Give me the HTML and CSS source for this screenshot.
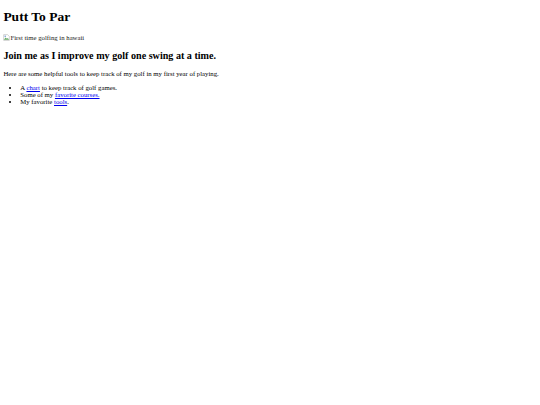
FILE: index.html
```html
<!DOCTYPE html>
<html>
<head>
<meta charset="utf-8">
<title>Putt To Par</title>
<link rel="stylesheet" href="styles.css">
</head>
<body class="page">
<h1 class="title">Putt To Par</h1>
<p class="para"><span class="broken"><svg class="broken-icon" width="7" height="7" viewBox="0 0 16 16"><path d="M1.5 1.5h9l4 4v9h-13z" fill="#fff" stroke="#999"/><path d="M2 13l4-5 3 3 2-2 3 4z" fill="#6a6"/><circle cx="5" cy="5" r="1.6" fill="#58c"/></svg>First time golfing in hawaii</span></p>
<h2 class="subtitle">Join me as I improve my golf one swing at a time.</h2>
<p class="para">Here are some helpful tools to keep track of my golf in my first year of playing.</p>
<ul class="list">
<li>A <a class="link" href="#">chart</a> to keep track of golf games.</li>
<li>Some of my <a class="link" href="#">favorite courses.</a></li>
<li>My favorite <a class="link" href="#">tools</a>.</li>
</ul>
</body>
</html>
```
FILE: styles.css
```css
html { background: #fff; }
.page {
  margin: 0;
  padding: 0 3.375px 3.375px;
  font-family: "Liberation Serif", "Times New Roman", serif;
  font-size: 6.75px;
  color: #000;
}
.title {
  font-size: 13.5px;
  font-weight: bold;
  margin: 9.045px 0;
}
.subtitle {
  font-size: 10.125px;
  font-weight: bold;
  margin: 8.4px 0;
}
.para {
  margin: 6.75px 0;
}
.broken {
  display: inline-flex;
  align-items: flex-end;
  color: #222;
}
.broken-icon {
  display: block;
}
.list {
  margin: 6.75px 0;
  padding-left: 16.875px;
}
.link {
  color: #0000ee;
  text-decoration: underline;
}
```
